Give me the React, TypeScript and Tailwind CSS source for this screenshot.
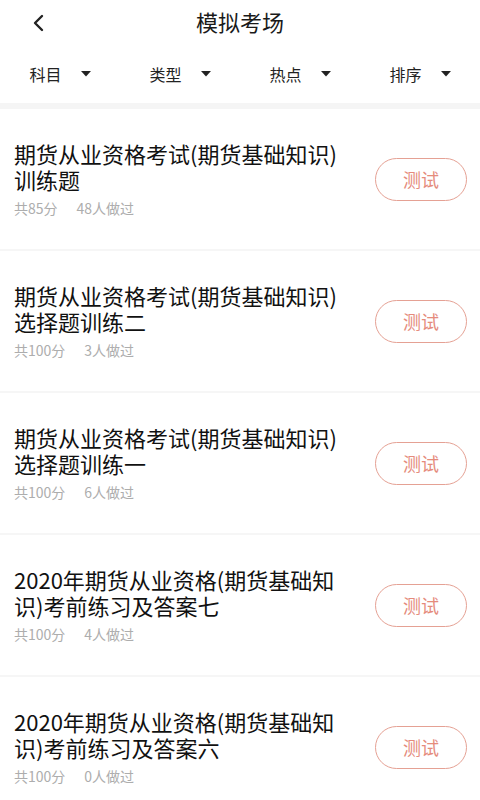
import React from 'react';

type Exam = { title: string; score: number; done: number };

const EXAMS: Exam[] = [
  { title: '期货从业资格考试(期货基础知识)训练题', score: 85, done: 48 },
  { title: '期货从业资格考试(期货基础知识)选择题训练二', score: 100, done: 3 },
  { title: '期货从业资格考试(期货基础知识)选择题训练一', score: 100, done: 6 },
  { title: '2020年期货从业资格(期货基础知识)考前练习及答案七', score: 100, done: 4 },
  { title: '2020年期货从业资格(期货基础知识)考前练习及答案六', score: 100, done: 0 },
];

const FILTERS = ['科目', '类型', '热点', '排序'];

const font = { fontFamily: '"Noto Sans CJK SC", "Noto Sans", sans-serif' };

export default function App() {
  return (
    <div className="w-[480px] h-[800px] overflow-hidden bg-white" style={font}>
      {/* Top bar */}
      <div className="relative h-[45px] flex items-center justify-center">
        <button className="absolute left-[30px] top-[13px] w-[16px] h-[20px] flex items-center justify-center">
          <svg width="12" height="18" viewBox="0 0 12 18" fill="none">
            <path d="M10 2 L3 9 L10 16" stroke="#222" strokeWidth="2.4" strokeLinecap="round" strokeLinejoin="round" />
          </svg>
        </button>
        <h1 className="text-[22px] leading-[28px] text-[#1a1a1a] -mt-[3px]">模拟考场</h1>
      </div>

      {/* Filters */}
      <div className="h-[58px] grid grid-cols-4 items-center">
        {FILTERS.map(f => (
          <div key={f} className="flex items-center justify-center gap-[19px]">
            <span className="text-[16px] text-[#222] leading-none">{f}</span>
            <svg width="10" height="6" viewBox="0 0 10 6">
              <path d="M0 0 L10 0 L5 5.5 Z" fill="#222" />
            </svg>
          </div>
        ))}
      </div>
      <div className="h-[6px] bg-[#f5f5f5]" />

      {/* List */}
      <div>
        {EXAMS.map((e, i) => (
          <div key={i} className="border-b-2 border-[#f6f6f6]">
            <div className="h-[140px] flex items-center pl-[14px] pr-[13px]">
              <div className="flex-1 min-w-0">
                <div className="w-[331px] text-[22px] leading-[26px] text-[#111]">{e.title}</div>
                <div className="mt-[6px] flex gap-[19px] text-[14px] leading-[20px] text-[#adadad]">
                  <span>共{e.score}分</span>
                  <span>{e.done}人做过</span>
                </div>
              </div>
              <button className="w-[92px] h-[43px] rounded-full border-[1.5px] border-[#e5a194] text-[18px] text-[#e58b7c] flex items-center justify-center">
                测试
              </button>
            </div>
          </div>
        ))}
      </div>
    </div>
  );
}
